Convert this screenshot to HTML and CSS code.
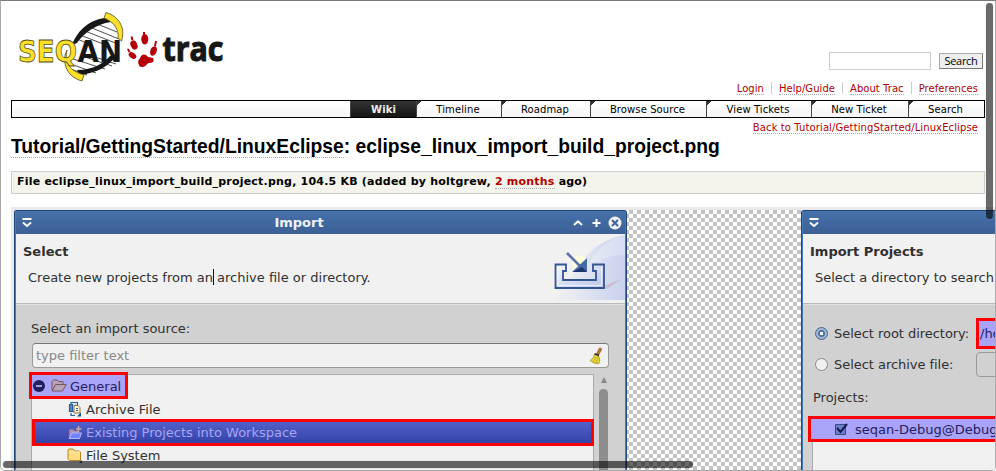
FILE: index.html
```html
<!DOCTYPE html>
<html lang="en">
<head>
<meta charset="utf-8">
<title>eclipse_linux_import_build_project.png – Trac</title>
<link rel="stylesheet" href="styles.css">
</head>
<body>
<div class="page">
  <header class="banner">
    <svg class="logo" width="214" height="76" viewBox="14 8 214 76">
      <path d="M70 61C68 38 85 23 105 19L118 29C126 53 102 74 82 74Z" fill="#fff"/>
      <g stroke="#222" stroke-width=".8"><path d="M97 24l20 8M92 28l27 11M85 31l33 13M80 35l26 10M77 39l12 5M70 58l35 11M68 63l28 10M68 68l19 7M85 57l27 9M98 58l18 6"/></g>
      <path d="M72 45C78 29 91 19 106 18L111 22C96 24 84 33 77 43Z" fill="#171717"/>
      <path d="M117 55C109 66 97 73 80 75L77 70C93 70 104 63 110 56Z" fill="#171717"/>
      <path d="M106 12.500C118 16 126 27 121.500 41L118 38C119 29 114 22 104 18Z" fill="#fbe02a" stroke="#554c18" stroke-width=".8"/>
      <path d="M67 50C64 63 70 71 84 75L82 81C70 78 63 68 65 55Z" fill="#fbe02a" stroke="#554c18" stroke-width=".8"/>
      <text x="18" y="61.500" class="logo-seq" textLength="59" lengthAdjust="spacingAndGlyphs">SEQ</text>
      <text x="77.500" y="61.500" class="logo-an" textLength="44.500" lengthAdjust="spacingAndGlyphs">AN</text>
      <g fill="#b5000a">
        <ellipse cx="144.800" cy="39.300" rx="3.500" ry="5.300"/><ellipse cx="134" cy="45" rx="3.300" ry="4.800" transform="rotate(-25 134 45)"/><ellipse cx="153.500" cy="51" rx="3.200" ry="5" transform="rotate(20 153.500 51)"/><ellipse cx="132.500" cy="55.500" rx="2.800" ry="4.200" transform="rotate(-55 132.500 55.500)"/>
        <path d="M139 65c-2-4 0-5 1-7 2-5 6-4 8-1l5 1c2 4-1 5-4 5-3 1-3 4-7 4-2 0-3-1-3-2Z"/>
        <path d="M143 32h2v3h-2zM130.500 36.500h2l1 3-2 1zM155 41l2 0-1 5-2 0zM127 49l1.500-.5 2 3-2 1z"/>
      </g>
      <text x="162.500" y="61" class="logo-trac" textLength="61" lengthAdjust="spacingAndGlyphs">trac</text>
    </svg>
    <div class="tools">
      <form class="search"><span class="search-input"></span><span class="search-button">Search</span></form>
      <nav class="metanav"><span><a>Login</a></span><span><a>Help/Guide</a></span><span><a>About Trac</a></span><span><a>Preferences</a></span></nav>
    </div>
  </header>
  <nav class="mainnav"><a class="active">Wiki</a><a>Timeline</a><a>Roadmap</a><a>Browse Source</a><a>View Tickets</a><a>New Ticket</a><a>Search</a></nav>
  <div class="ctxtnav"><a>Back to Tutorial/GettingStarted/LinuxEclipse</a></div>
  <h1><a>Tutorial/GettingStarted/LinuxEclipse</a>: eclipse_linux_import_build_project.png</h1>
  <div class="info"><span>File eclipse_linux_import_build_project.png, 104.5 KB (added by holtgrew, <a>2 months</a> ago)</span></div>
  <div class="preview">
    <section class="window first">
      <div class="titlebar">
        <svg class="menu-icon" width="10" height="10" viewBox="0 0 10 10"><path d="M.5 0h9v2h-9z" fill="#fff"/><path d="M1 4.500L5 8l4-3.500" fill="none" stroke="#fff" stroke-width="1.900"/></svg>
        <b>Import</b>
        <svg class="controls" width="50" height="14" viewBox="0 0 50 14"><path d="M2 9l4-3.700L10 9M20.500 7h8M24.500 3v8" fill="none" stroke="#fff" stroke-width="2"/><circle cx="43" cy="7" r="6.500" fill="#f1f3f7"/><path d="M40 4l6 6M46 4l-6 6" stroke="#3c659d" stroke-width="2"/></svg>
      </div>
      <div class="heading">
        <div class="heading-text"><strong>Select</strong><p>Create new projects from an<i class="caret"></i> archive file or directory.</p></div>
        <svg class="import-art" width="76" height="67" viewBox="548 234 76 67">
          <defs><linearGradient id="fade"><stop stop-color="#e4e8f4" stop-opacity="0"/><stop offset=".45" stop-color="#e1e5f1"/><stop offset="1" stop-color="#c8d1ef"/></linearGradient><linearGradient id="tray" x2="1" y2="1"><stop stop-color="#f4f5fc"/><stop offset="1" stop-color="#bac5e8"/></linearGradient></defs>
          <path d="M550 300C570 291 576 243 624 235v65Z" fill="url(#fade)"/><path d="M589 262q14-23 35-27v20q-18 0-26 7Z" fill="#fff" opacity=".25"/>
          <path d="M602 286l19-7-15 10Z" fill="#c9b5c8" opacity=".75"/>
          <path d="M554.500 264.500h10.500v6.500h-3v9h33v-9h-3v-6.500h11v23.500h-48.500Z" fill="url(#tray)" stroke="#355494" stroke-width="1.800"/><path d="M557 267v18.500h43.500V267" fill="none" stroke="#fff" stroke-opacity=".65"/>
          <circle cx="579" cy="263" r="7.500" fill="#ffffdc"/><path d="M566 253l13 13" stroke="#5974a8" stroke-width="2.600"/><path d="M571 272l15-14v14Z" fill="#476aa6"/><path d="M572 272l9-5 5 5Z" fill="#1d376e"/>
        </svg>
      </div>
      <div class="content">
        <label>Select an import source:</label>
        <div class="filter"><span>type filter text</span>
          <svg width="15" height="18" viewBox="0 0 15 18"><path d="M10 1.500Q13 0 12.500 3L9.500 8l-2-1Z" fill="#b57935" stroke="#8a5120" stroke-width=".6"/><path d="M5.500 7.500l4 1.500c2 3 1 5 .5 7.500Q5 17.500 1 13.500q4-2 4.500-6Z" fill="#ead937" stroke="#9b851b" stroke-width=".7"/><path d="M5.500 6.800l4.500 1.800" stroke="#333" stroke-width="1.600"/><path d="M7 10l-3 5M9 10l-2 6" stroke="#a38b19" stroke-width=".6"/></svg>
        </div>
        <div class="tree-wrap">
          <div class="tree">
            <div class="general-row"><svg class="collapse" width="12" height="12" viewBox="0 0 12 12"><circle cx="6" cy="6" r="6" fill="#21205d"/><path d="M3 6h6" stroke="#c6bdf9" stroke-width="1.600"/></svg><svg class="folder-icon" width="16" height="13" viewBox="0 0 16 13"><path d="M1 11V2.500L2.500 1H6l1.500 1.500H12V5" fill="#b9a0ba" stroke="#78565f"/><path d="M1 12L4.500 5.500h10.700L11.500 12Z" fill="#b9a1ba" stroke="#78565f"/></svg><span>General</span></div>
            <div class="row"><svg width="14" height="16" viewBox="0 0 14 16"><path d="M3 1.500h6.500v9H3zM1.500 3.500h3v7h-3z" fill="#d9e9f7" stroke="#265c98" stroke-width="1.200"/><path d="M6 4.500h4l2 2v5.500H6z" fill="#fff6d8" stroke="#897448"/><path d="M8 7.500h2M8 9.500h2M3 12v2.500h4" stroke="#265c98" fill="none" stroke-width="1.200"/><path d="M13 11.500v4H9z" fill="#164b8b"/></svg><span>Archive File</span></div>
            <div class="row selected"><svg width="14" height="14" viewBox="0 0 14 14"><path d="M1 12V4l1-1h3l1.500 1.500H11V7" fill="#ae93b7" stroke="#715894"/><path d="M1 12.500L4 7h9.500l-2 5.500Z" fill="#6d83ff" stroke="#b2b6ff"/><path d="M10.500 0v6M8 3h5.500" stroke="#c7a8ae" stroke-width="1.500"/></svg><span>Existing Projects into Workspace</span></div>
            <div class="row last"><svg width="16" height="15" viewBox="0 0 16 15"><path d="M1 11V2L2 1h4l2 2h4l1.500 1v8.500h-11Z" fill="#ffdc84" stroke="#b78223"/><path d="M2 4h11" stroke="#fff2bd"/><path d="M15 12v3h-3z" fill="#164b8b"/></svg><span>File System</span></div>
          </div>
          <div class="tree-scroll"><span class="arrow"></span><span class="thumb"></span></div>
        </div>
      </div>
    </section>
    <section class="window second">
      <div class="titlebar"><svg class="menu-icon" width="10" height="10" viewBox="0 0 10 10"><path d="M.5 0h9v2h-9z" fill="#fff"/><path d="M1 4.500L5 8l4-3.500" fill="none" stroke="#fff" stroke-width="1.900"/></svg></div>
      <div class="heading"><div class="heading-text"><strong>Import Projects</strong><p>Select a directory to search</p></div></div>
      <div class="content">
        <div class="choice root"><i class="radio checked"></i><span>Select root directory:</span><div class="root-path">/home</div></div>
        <div class="choice archive"><i class="radio"></i><span>Select archive file:</span><div class="archive-path"></div></div>
        <label>Projects:</label>
        <div class="projects"><div class="project-row"><svg width="14" height="14" viewBox="0 0 14 14"><path d="M1.500 2.500h10v10h-10z" fill="#6c82c8" stroke="#354983"/><path d="M3 6l3.500 4L13 2" fill="none" stroke="#191850" stroke-width="2"/></svg><span>seqan-Debug@Debug</span></div></div>
      </div>
    </section>
  </div>
</div>
<div class="scrollbar vertical"></div>
<div class="scrollbar horizontal"></div>
</body>
</html>
```

FILE: styles.css
```css
* { box-sizing: border-box; }
body { margin: 0; width: 996px; height: 471px; overflow: hidden; background: #fff; color: #000; font: 10px "DejaVu Sans", sans-serif; }
.page { width: 996px; height: 471px; overflow: hidden; border: 1px solid #aaa; border-top-color: #777; border-radius: 0 0 5px 5px; padding: 0 10px; }
.banner { height: 99px; display: flex; justify-content: space-between; }
.logo { margin: 7px 0 0 3px; overflow: visible; }
.logo-seq { font: bold 30px "DejaVu Sans", sans-serif; fill: #fbe02a; stroke: #554c18; stroke-width: .8px; }
.logo-an { font: bold 30px "DejaVu Sans", sans-serif; fill: #171717; }
.logo-trac { font: bold 33.5px "Open Sans", sans-serif; fill: #171717; stroke: #171717; stroke-width: 1.1px; }
.tools { display: flex; flex-direction: column; align-items: flex-end; padding-top: 51px; }
.search { display: flex; align-items: center; gap: 8px; height: 18px; margin-right: 2px; }
.search-input { width: 102px; height: 18px; border: 1px solid #ccc; }
.search-button { width: 44px; height: 16px; border: 1px solid #aaa; border-right-color: #777; border-bottom-color: #777; background: #eee; font: 11px/14px "Open Sans", sans-serif; letter-spacing: -.3px; text-align: center; }
.metanav { display: flex; margin: 12px 7px 0 0; line-height: 14px; }
.metanav span { height: 12px; padding: 0 7px; border-left: 1px solid #ccc; }
.metanav span:first-child { border: 0; }
.metanav span:last-child { padding-right: 0; }
.metanav a, .ctxtnav a { display: inline-block; height: 13px; border-bottom: 1px dotted #aaa; color: #b00000; letter-spacing: .11px; }
.metanav a { letter-spacing: .05px; }
.mainnav { height: 18px; width: 974px; border: 1px solid #000; display: grid; grid-template-columns: 66px 85px 89px 116px 105px 97px 76px; justify-content: end; background: linear-gradient(#fff, #f6f6f6); line-height: 18px; text-align: center; letter-spacing: .1px; }
.mainnav a { height: 16px; padding-right: 2px; border-left: 1px solid #444; background: linear-gradient(135deg, #333 0 3.2px, transparent 3.200px); }
.mainnav .active { padding-right: 0; background: linear-gradient(#333, #151515); color: #eee; font-weight: bold; }
.ctxtnav { display: flex; justify-content: flex-end; padding: 3px 7px 0 0; height: 17px; line-height: 14px; }
h1 { margin: 0; height: 36px; font: bold 19.3px/23px "Liberation Sans", sans-serif; white-space: nowrap; }
h1 a { display: inline-block; height: 23px; border-bottom: 1px dotted #aaa; }
.info { width: 974px; height: 23px; padding: 0 5px; border: 1px solid #ccc; background: #f5f4ec; font-size: 11px; font-weight: bold; letter-spacing: .21px; line-height: 20px; white-space: nowrap; }
.info a { color: #b00000; border-bottom: 1px dotted #aaa; }
.preview { display: flex; gap: 174px; width: 984px; height: 263px; margin-top: 13px; padding-left: 3px; border-top: 3px solid #eaeaea; overflow: hidden; background: linear-gradient(#eaeaea, #eaeaea) 0 0 / 3px 100% no-repeat, repeating-conic-gradient(#fff 0 25%, #c3c3c3 0 50%) 2px 0 / 8px 8px; }
.window { flex: none; height: 263px; border: solid #1f477b; border-width: 1px 1px 0; box-shadow: inset 1px 0 #447abb, inset -1px 0 #447abb; padding: 0 1px; font-size: 13px; color: #303030; background: #d0d0d0; border-radius: 3px 3px 0 0; }
.first { width: 613px; }
.second { width: 400px; }
.titlebar { height: 23px; display: grid; grid-template-columns: 37px 1fr 80px; align-items: center; background: linear-gradient(#4771aa, #3b6096); color: #f0f2f6; text-align: center; }
.menu-icon { margin-left: 6px; }
.controls { justify-self: end; margin-right: 3px; }
.heading { height: 70px; display: flex; justify-content: space-between; border-bottom: 1px solid #b9b9b9; background: #f1f1f1; overflow: hidden; }
.heading-text { padding: 9px 7px; white-space: nowrap; }
.heading strong { display: block; height: 25px; line-height: 17px; }
.heading p { margin: 0 0 0 5px; line-height: 19px; }
.caret { display: inline-block; width: 1px; height: 16px; margin-right: -1px; background: #111; vertical-align: -3px; }
.content { padding: 15px 15px 0; background: #d1d1d1; border-top: 1px solid #dedede; }
.first label { display: block; height: 23px; line-height: 17px; }
.filter { display: flex; justify-content: space-between; align-items: center; width: 577px; height: 25px; margin-left: 1px; border: 1px solid #999; border-top-color: #777; border-radius: 4px; background: #f1f1f1; color: #888; padding: 0 4px 0 3px; }
.tree-wrap { display: flex; margin-top: 6px; gap: 5px; }
.tree { width: 563px; height: 105px; border: 1px solid #aaa; border-bottom: 0; background: #f1f1f1; }
.general-row { display: flex; align-items: center; width: 99px; height: 27px; margin: -3px 0 0 -3px; border: 3px solid red; background: #a9a4f8; color: #252061; padding-left: 1px; }
.general-row span { padding-top: 1px; }
.folder-icon { margin: 0 3px 0 6px; }
.row { display: flex; align-items: center; height: 20px; padding-left: 35px; }
.row svg { width: 16px; margin-right: 3px; }
.row.selected { width: 562px; height: 27px; border: 3px solid red; padding-left: 32px; background: linear-gradient(#5261c9, #3443a8); color: #a8a4f5; }
.row.last { height: 19px; }
.tree-scroll { width: 9px; display: flex; flex-direction: column; align-items: center; padding-top: 3px; }
.arrow { border: 3px solid transparent; border-top: 0; border-bottom: 6px solid #888; }
.thumb { width: 9px; height: 90px; margin-top: 6px; background: #8d8d8d; border-radius: 5px 5px 0 0; }
.second .content { padding: 14px 0 0 9px; }
.choice { display: flex; align-items: center; height: 29px; white-space: nowrap; padding-left: 3px; }
.root { height: 31px; margin-bottom: 1px; margin-top: -1px; }
.choice span { width: 142px; margin-left: 6px; letter-spacing: -.04px; }
.root span { padding-bottom: 1px; }
.radio { width: 13px; height: 13px; border: 1px solid #888; border-radius: 50%; background: #f1f1f1; }
.radio.checked { border-color: #45658f; background: radial-gradient(circle, #f1f3f8 0 1.5px, #4e719e 2px 3px, #9fb6d3 4px 5px); }
.root-path { width: 150px; height: 31px; border: 3px solid red; background: #a9a4f8; color: #252061; line-height: 25px; padding-left: 1px; }
.archive-path { width: 150px; height: 25px; border: 1px solid #999; border-radius: 4px; }
.second label { display: block; height: 37px; padding-left: 1px; line-height: 38px; }
.projects { width: 300px; height: 60px; border: 1px solid #aaa; background: #f1f1f1; }
.project-row { display: flex; align-items: center; height: 26px; margin: -1px 0 0 -5px; padding-left: 23px; border: 3px solid red; background: #a9a4f8; color: #252061; }
.project-row svg { margin-right: 7px; }
.scrollbar { position: fixed; border-radius: 4px; background: rgba(0, 0, 0, .59); box-shadow: 0 0 1px #999; }
.vertical { left: 986px; top: 3px; width: 7px; height: 216px; }
.horizontal { left: 3px; top: 461px; width: 690px; height: 7px; }
```
